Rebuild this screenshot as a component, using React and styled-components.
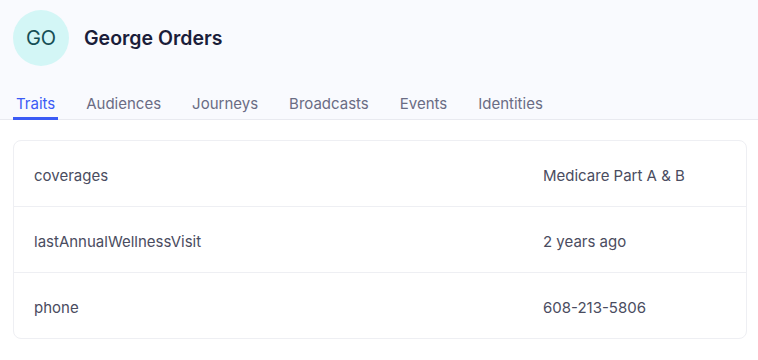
import React from 'react'
import styled, { createGlobalStyle } from 'styled-components'

const Global = createGlobalStyle`
body {
  margin:0;
  background:#ffffff;
  font-family: Inter, "Noto Sans", sans-serif;
}
`

const Page = styled.div`
width:758px;
height:360px;
overflow:hidden;
background:#ffffff;
`

const Header = styled.div`
background:#f9fafe;
padding:10px 13px 0 13px;
border-bottom:1px solid #e9eaf0;
`

const Profile = styled.div`
display:flex;
align-items:center;
gap:15px;
height:56px;
`

const Avatar = styled.div`
width:56px;
height:56px;
border-radius:50%;
background:#d3f6f6;
color:#164e55;
display:flex;
align-items:center;
justify-content:center;
font-size:20px;
font-weight:400;
`

const Name = styled.h1`
margin:0;
font-size:19.5px;
font-weight:600;
color:#1b1d3a;
`

const Tabs = styled.div`
display:flex;
gap:25px;
margin-top:28px;
`

const Tab = styled.div`
padding:0 3px 3px 3px;
font-size:15px;
color:${p => p.active ? '#3b5bf5' : '#6a6c84'};
border-bottom:3px solid ${p => p.active ? '#3b5bf5' : 'transparent'};
margin-bottom:-1px;
line-height:20px;
`

const Card = styled.div`
margin:20px 11px 0 13px;
background:#ffffff;
border:1px solid #eeeff3;
border-radius:8px;
`

const Row = styled.div`
display:flex;
align-items:center;
height:62px;
padding:3px 20px 0 20px;
font-size:15px;
color:#4a4c60;
& + & {
  border-top:1px solid #eeeff3;
}
`

const Key = styled.div`
flex:1;
`

const Value = styled.div`
width:183px;
`

const traits = [
  ['coverages', 'Medicare Part A & B'],
  ['lastAnnualWellnessVisit', '2 years ago'],
  ['phone', '608-213-5806'],
]

const tabs = ['Traits', 'Audiences', 'Journeys', 'Broadcasts', 'Events', 'Identities']

const App = () => {
  return (
    <Page>
      <Global />
      <Header>
        <Profile>
          <Avatar>GO</Avatar>
          <Name>George Orders</Name>
        </Profile>
        <Tabs>
          {tabs.map((t, i) => <Tab key={t} active={i === 0}>{t}</Tab>)}
        </Tabs>
      </Header>
      <Card>
        {traits.map(([k, v]) => (
          <Row key={k}>
            <Key>{k}</Key>
            <Value>{v}</Value>
          </Row>
        ))}
      </Card>
    </Page>
  )
}

export default App
